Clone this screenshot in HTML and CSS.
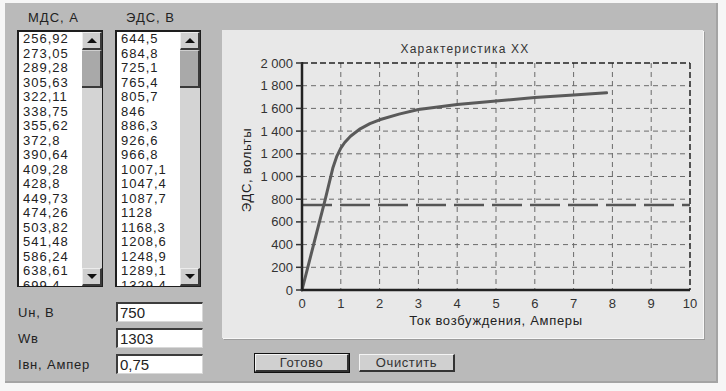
FILE: index.html
```html
<!DOCTYPE html>
<html lang="ru">
<head>
    <meta charset="UTF-8">
    <title>Характеристика XX</title>
    <link rel="stylesheet" href="styles.css">
</head>
<body>
    <div class="janela">
        <div class="esquerda">
            <div class="listas">
                <div class="coluna">
                    <div class="titulo">МДС, А</div>
                    <div class="lista">
                        <div class="itens">
                            <div>256,92</div><div>273,05</div><div>289,28</div><div>305,63</div>
                            <div>322,11</div><div>338,75</div><div>355,62</div><div>372,8</div>
                            <div>390,64</div><div>409,28</div><div>428,8</div><div>449,73</div>
                            <div>474,26</div><div>503,82</div><div>541,48</div><div>586,24</div>
                            <div>638,61</div><div>699,4</div>
                        </div>
                        <div class="rolagem">
                            <div class="botao-seta"><span class="seta-cima"></span></div>
                            <div class="polegar"></div>
                            <div class="trilho"></div>
                            <div class="botao-seta"><span class="seta-baixo"></span></div>
                        </div>
                    </div>
                </div>
                <div class="coluna">
                    <div class="titulo">ЭДС, В</div>
                    <div class="lista">
                        <div class="itens">
                            <div>644,5</div><div>684,8</div><div>725,1</div><div>765,4</div>
                            <div>805,7</div><div>846</div><div>886,3</div><div>926,6</div>
                            <div>966,8</div><div>1007,1</div><div>1047,4</div><div>1087,7</div>
                            <div>1128</div><div>1168,3</div><div>1208,6</div><div>1248,9</div>
                            <div>1289,1</div><div>1329,4</div>
                        </div>
                        <div class="rolagem">
                            <div class="botao-seta"><span class="seta-cima"></span></div>
                            <div class="polegar"></div>
                            <div class="trilho"></div>
                            <div class="botao-seta"><span class="seta-baixo"></span></div>
                        </div>
                    </div>
                </div>
            </div>

            <div class="campos">
                <div class="campo"><label>Uн, В</label><div class="entrada">750</div></div>
                <div class="campo"><label>Wв</label><div class="entrada">1303</div></div>
                <div class="campo"><label>Iвн, Ампер</label><div class="entrada">0,75</div></div>
            </div>
        </div>

        <div class="direita">
            <div class="grafico">
                <svg width="481" height="308" viewBox="0 0 481 308">
                    <text class="g-titulo" x="243" y="23" text-anchor="middle">Характеристика XX</text>

                    <!-- grade -->
                    <g class="grade">
                        <line x1="80" y1="237.3" x2="468" y2="237.3"/>
                        <line x1="80" y1="214.6" x2="468" y2="214.6"/>
                        <line x1="80" y1="191.9" x2="468" y2="191.9"/>
                        <line x1="80" y1="169.2" x2="468" y2="169.2"/>
                        <line x1="80" y1="146.5" x2="468" y2="146.5"/>
                        <line x1="80" y1="123.8" x2="468" y2="123.8"/>
                        <line x1="80" y1="101.1" x2="468" y2="101.1"/>
                        <line x1="80" y1="78.4" x2="468" y2="78.4"/>
                        <line x1="80" y1="55.7" x2="468" y2="55.7"/>
                        <line x1="118.8" y1="33" x2="118.8" y2="260"/>
                        <line x1="157.6" y1="33" x2="157.6" y2="260"/>
                        <line x1="196.4" y1="33" x2="196.4" y2="260"/>
                        <line x1="235.2" y1="33" x2="235.2" y2="260"/>
                        <line x1="274" y1="33" x2="274" y2="260"/>
                        <line x1="312.8" y1="33" x2="312.8" y2="260"/>
                        <line x1="351.6" y1="33" x2="351.6" y2="260"/>
                        <line x1="390.4" y1="33" x2="390.4" y2="260"/>
                        <line x1="429.2" y1="33" x2="429.2" y2="260"/>
                    </g>
                    <g class="borda">
                        <line x1="80" y1="33" x2="468" y2="33"/>
                        <line x1="468" y1="33" x2="468" y2="260"/>
                    </g>

                    <!-- linha Uн -->
                    <line class="nivel" x1="80" y1="175" x2="468" y2="175"/>

                    <!-- curva -->
                    <polyline class="curva" points="80,260 91.6,214.6 103.3,169.2 111,137.4 114.9,126.1 118.8,118.1 122.7,112.5 128.5,106.2 138.2,98.8 147.9,93.7 157.6,89.8 177,84.1 196.4,79.5 235.2,74.4 274,71 312.8,67.6 351.6,65 384.6,62.8"/>

                    <g class="eixo">
                        <line x1="80" y1="32" x2="80" y2="261"/>
                        <line x1="79" y1="260" x2="468" y2="260"/>
                    </g>
                    <g class="tique">
                        <line x1="74" y1="260" x2="80" y2="260"/>
                        <line x1="74" y1="237.3" x2="80" y2="237.3"/>
                        <line x1="74" y1="214.6" x2="80" y2="214.6"/>
                        <line x1="74" y1="191.9" x2="80" y2="191.9"/>
                        <line x1="74" y1="169.2" x2="80" y2="169.2"/>
                        <line x1="74" y1="146.5" x2="80" y2="146.5"/>
                        <line x1="74" y1="123.8" x2="80" y2="123.8"/>
                        <line x1="74" y1="101.1" x2="80" y2="101.1"/>
                        <line x1="74" y1="78.4" x2="80" y2="78.4"/>
                        <line x1="74" y1="55.7" x2="80" y2="55.7"/>
                        <line x1="74" y1="33" x2="80" y2="33"/>
                    </g>

                    <g class="rotulo" text-anchor="end">
                        <text x="71" y="264.5">0</text>
                        <text x="71" y="241.8">200</text>
                        <text x="71" y="219.1">400</text>
                        <text x="71" y="196.4">600</text>
                        <text x="71" y="173.7">800</text>
                        <text x="71" y="151">1 000</text>
                        <text x="71" y="128.3">1 200</text>
                        <text x="71" y="105.6">1 400</text>
                        <text x="71" y="82.9">1 600</text>
                        <text x="71" y="60.2">1 800</text>
                        <text x="71" y="37.5">2 000</text>
                    </g>
                    <g class="rotulo" text-anchor="middle">
                        <text x="80" y="278">0</text>
                        <text x="118.8" y="278">1</text>
                        <text x="157.6" y="278">2</text>
                        <text x="196.4" y="278">3</text>
                        <text x="235.2" y="278">4</text>
                        <text x="274" y="278">5</text>
                        <text x="312.8" y="278">6</text>
                        <text x="351.6" y="278">7</text>
                        <text x="390.4" y="278">8</text>
                        <text x="429.2" y="278">9</text>
                        <text x="468" y="278">10</text>
                    </g>
                    <text class="eixo-nome" x="274" y="295" text-anchor="middle">Ток возбуждения, Амперы</text>
                    <text class="eixo-nome" x="0" y="0" text-anchor="middle" transform="translate(29 140) rotate(-90)">ЭДС, вольты</text>
                </svg>
            </div>
            <div class="botoes">
                <button class="padrao">Готово</button>
                <button>Очистить</button>
            </div>
        </div>
    </div>
</body>
</html>
```

FILE: styles.css
```css
body {
    margin: 0;
    padding: 0;
    background-color: #f6f6f6;
    font-family: "Liberation Sans", Arial, sans-serif;
    color: #222;
}

.janela {
    display: flex;
    align-items: flex-start;
    box-sizing: border-box;
    width: 713px;
    height: 380px;
    margin: 3px 0 0 5px;
    padding: 5px 0 0 12px;
    background-color: #bababa;
    border-right: 2px solid #a4a4a4;
    border-bottom: 2px solid #a4a4a4;
}

.esquerda {
    width: 190px;
}

.listas {
    display: flex;
    gap: 12px;
}

.titulo {
    height: 20px;
    padding-left: 11px;
    font-size: 13px;
    letter-spacing: 1px;
    line-height: 20px;
    margin-bottom: 2px;
}

.lista {
    display: flex;
    box-sizing: border-box;
    width: 86px;
    height: 257px;
    border: 1px solid #1e1e1e;
    border-top-width: 2px;
    border-left-width: 2px;
    background-color: #fff;
    overflow: hidden;
}

.itens {
    flex: 1;
    padding: 0 0 0 4px;
    font-size: 13px;
    letter-spacing: 1px;
    line-height: 14.5px;
}

.rolagem {
    display: flex;
    flex-direction: column;
    width: 20px;
    background-color: #d2d2d2;
}

.botao-seta {
    display: flex;
    align-items: center;
    justify-content: center;
    box-sizing: border-box;
    height: 18px;
    background-color: #cfcfcf;
    border-top: 1px solid #ececec;
    border-left: 1px solid #ececec;
    border-right: 2px solid #3a3a3a;
    border-bottom: 2px solid #3a3a3a;
}

.seta-cima {
    width: 0;
    height: 0;
    border-left: 5px solid transparent;
    border-right: 5px solid transparent;
    border-bottom: 5px solid #111;
}

.seta-baixo {
    width: 0;
    height: 0;
    border-left: 5px solid transparent;
    border-right: 5px solid transparent;
    border-top: 5px solid #111;
}

.polegar {
    box-sizing: border-box;
    height: 38px;
    background-color: #a9a9a9;
    border-right: 2px solid #3a3a3a;
    border-bottom: 2px solid #3a3a3a;
    border-top: 1px solid #cfcfcf;
}

.trilho {
    flex: 1;
    background-color: #d4d4d4;
}

.campos {
    display: flex;
    flex-direction: column;
    gap: 6px;
    margin-top: 15px;
}

.campo {
    display: flex;
    align-items: center;
    height: 20px;
}

.campo label {
    width: 98px;
    padding-left: 1px;
    font-size: 13px;
    letter-spacing: 0.8px;
}

.entrada {
    box-sizing: border-box;
    width: 87px;
    height: 20px;
    padding-left: 2px;
    background-color: #fff;
    border-top: 2px solid #3c3c3c;
    border-left: 2px solid #3c3c3c;
    border-right: 1px solid #d8d8d8;
    border-bottom: 1px solid #d8d8d8;
    font-size: 15px;
    line-height: 18px;
}

.direita {
    margin-left: 15px;
    padding-top: 22px;
}

.grafico {
    width: 481px;
    height: 308px;
    background-color: #e8e8e8;
    box-shadow: 1px 1px 0 #f8f8f8, 2px 2px 0 #9c9c9c;
}

.grafico svg {
    display: block;
    font-family: "Liberation Sans", Arial, sans-serif;
}

.g-titulo {
    font-size: 12px;
    letter-spacing: 1.2px;
    fill: #333;
}

.grade line {
    stroke: #6a6a6a;
    stroke-width: 1;
    stroke-dasharray: 5 4;
}

.borda line {
    stroke: #222;
    stroke-width: 1.5;
    stroke-dasharray: 6 3;
}

.nivel {
    stroke: #555;
    stroke-width: 2.5;
    stroke-dasharray: 30 8;
}

.curva {
    fill: none;
    stroke: #5a5a5a;
    stroke-width: 3;
    stroke-linejoin: round;
    stroke-linecap: round;
}

.eixo line {
    stroke: #222;
    stroke-width: 2.5;
}

.tique line {
    stroke: #333;
    stroke-width: 1.5;
}

.rotulo text {
    font-size: 13px;
    fill: #333;
}

.eixo-nome {
    font-size: 13px;
    letter-spacing: 0.7px;
    fill: #222;
}

.botoes {
    display: flex;
    gap: 10px;
    margin: 16px 0 0 33px;
}

button {
    box-sizing: border-box;
    width: 96px;
    height: 18px;
    padding: 0;
    background-color: #d0d0d0;
    border-top: 1px solid #f4f4f4;
    border-left: 1px solid #f4f4f4;
    border-right: 2px solid #333;
    border-bottom: 2px solid #333;
    font-family: "Liberation Sans", Arial, sans-serif;
    font-size: 13px;
    letter-spacing: 0.6px;
    color: #333;
}

button.padrao {
    width: 94px;
    outline: 1px solid #111;
}
```
